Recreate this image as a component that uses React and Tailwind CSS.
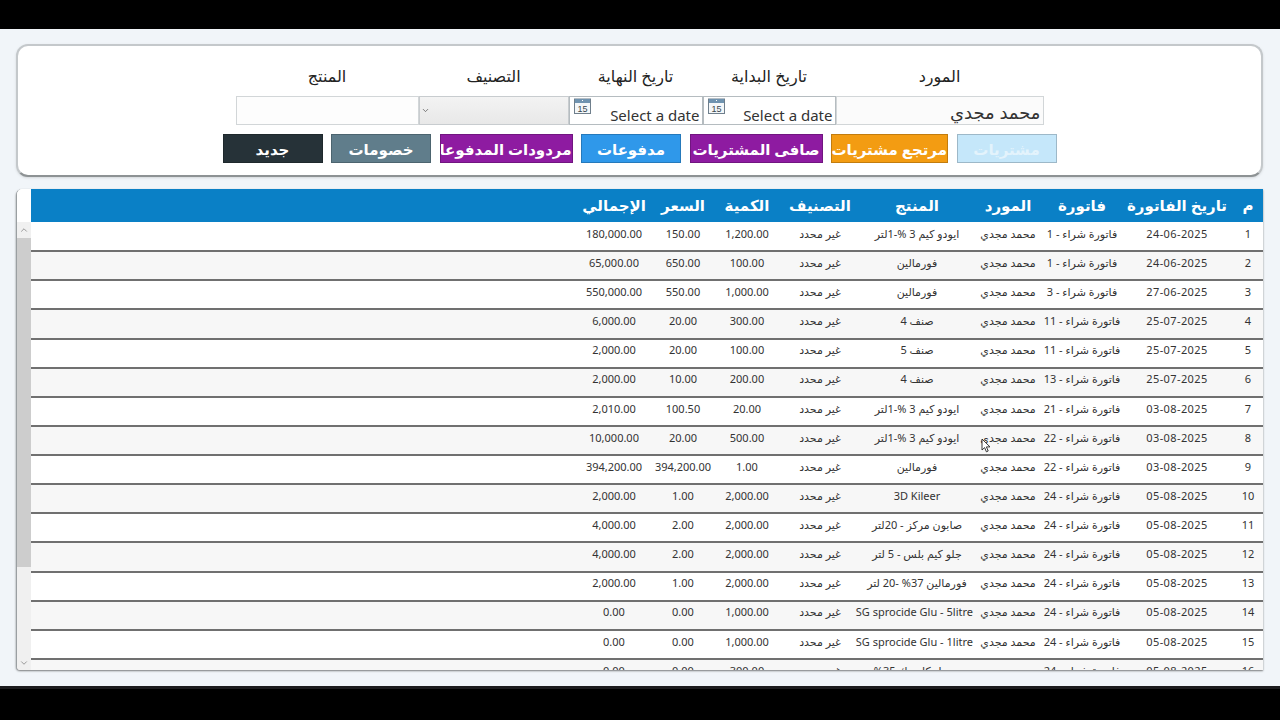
import { ChevronDown, ChevronUp } from "lucide-react";

const rows = [
  ["1", "24-06-2025", "فاتورة شراء - 1", "ايودو كيم 3 %-1لتر", "1,200.00", "150.00", "180,000.00"],
  ["2", "24-06-2025", "فاتورة شراء - 1", "فورمالين", "100.00", "650.00", "65,000.00"],
  ["3", "27-06-2025", "فاتورة شراء - 3", "فورمالين", "1,000.00", "550.00", "550,000.00"],
  ["4", "25-07-2025", "فاتورة شراء - 11", "صنف 4", "300.00", "20.00", "6,000.00"],
  ["5", "25-07-2025", "فاتورة شراء - 11", "صنف 5", "100.00", "20.00", "2,000.00"],
  ["6", "25-07-2025", "فاتورة شراء - 13", "صنف 4", "200.00", "10.00", "2,000.00"],
  ["7", "03-08-2025", "فاتورة شراء - 21", "ايودو كيم 3 %-1لتر", "20.00", "100.50", "2,010.00"],
  ["8", "03-08-2025", "فاتورة شراء - 22", "ايودو كيم 3 %-1لتر", "500.00", "20.00", "10,000.00"],
  ["9", "03-08-2025", "فاتورة شراء - 22", "فورمالين", "1.00", "394,200.00", "394,200.00"],
  ["10", "05-08-2025", "فاتورة شراء - 24", "3D Kileer", "2,000.00", "1.00", "2,000.00"],
  ["11", "05-08-2025", "فاتورة شراء - 24", "صابون مركز - 20لتر", "2,000.00", "2.00", "4,000.00"],
  ["12", "05-08-2025", "فاتورة شراء - 24", "جلو كيم بلس - 5 لتر", "2,000.00", "2.00", "4,000.00"],
  ["13", "05-08-2025", "فاتورة شراء - 24", "فورمالين 37% -20 لتر", "2,000.00", "1.00", "2,000.00"],
  ["14", "05-08-2025", "فاتورة شراء - 24", "SG sprocide Glu - 5litre", "1,000.00", "0.00", "0.00"],
  ["15", "05-08-2025", "فاتورة شراء - 24", "SG sprocide Glu - 1litre", "1,000.00", "0.00", "0.00"],
  ["16", "05-08-2025", "فاتورة شراء - 24", "معجل كلوريك 35% ", "300.00", "0.00", "0.00"],
];

function CalendarIcon() {
  return (
    <svg width="17" height="16" viewBox="0 0 17 16" className="absolute left-1 top-px">
      <rect x="0.5" y="1" width="16" height="14.5" fill="#f4f7f9" stroke="#6f7f8c" />
      <rect x="1" y="1" width="15" height="4" fill="#6f93b0" />
      <rect x="8" y="2" width="1" height="1" fill="#fff" />
      <text x="8.5" y="13.5" fontSize="9" textAnchor="middle" fill="#37474f" fontFamily="Liberation Sans, sans-serif">15</text>
    </svg>
  );
}

function Field({ label, width, children }) {
  return (
    <div className={`flex flex-col ${width}`}>
      <label className="h-[50px] pt-[18px] text-center text-base leading-6 text-[#222]">{label}</label>
      {children}
    </div>
  );
}

function DateField({ label, width }) {
  return (
    <Field label={label} width={width}>
      <div dir="ltr" className="relative h-[29px] border border-[#b5bcc0] bg-white pr-0.5 pt-[6px] text-right text-[15px] leading-6 text-[#333]">
        <CalendarIcon />
        Select a date
      </div>
    </Field>
  );
}

function Btn({ width, color, text = "text-white", children }) {
  return (
    <button className={`h-[29px] overflow-hidden whitespace-nowrap border border-black/20 text-[15px] font-bold leading-6 ${width} ${color} ${text}`}>
      {children}
    </button>
  );
}

const cols = ["w-[30px]", "w-[112px]", "w-[78px]", "w-[70px]", "w-[112px]", "w-[82px]", "w-[64px]", "w-[64px]", "w-[74px]"];

export default function App() {
  return (
    <div dir="rtl" className="relative flex h-[720px] w-[1280px] flex-col overflow-hidden bg-[#f1f5f9] font-['Noto_Sans','DejaVu_Sans',sans-serif]">
      <div className="h-[29px] shrink-0 bg-black" />
      <div className="flex flex-1 flex-col gap-[12px] px-4 pb-4 pr-[17px] pt-[15px]">
        {/* filters */}
        <section className="h-[133px] shrink-0 rounded-xl border-2 border-[#c4c8cb] border-b-[#8d9294] bg-white shadow-sm">
          <div className="flex justify-center">
            <Field label="المورد" width="w-[208px]">
              <div className="h-[29px] border border-[#d2d6d8] bg-[#fbfbfb] px-0.5 pt-px text-lg leading-7 text-[#333]">محمد مجدي</div>
            </Field>
            <DateField label="تاريخ البداية" width="w-[133px]" />
            <DateField label="تاريخ النهاية" width="w-[134px]" />
            <Field label="التصنيف" width="w-[150px]">
              <div className="flex h-[29px] items-center justify-end border border-[#c8cccf] bg-linear-to-b from-[#f3f3f3] to-[#e8e8e8] pl-px text-[#555]">
                <ChevronDown size={9} strokeWidth={2} />
              </div>
            </Field>
            <Field label="المنتج" width="w-[183px]">
              <div className="h-[29px] border border-[#d2d6d8] bg-[#fdfdfd]" />
            </Field>
          </div>
          <div className="mt-[9px] flex justify-center gap-[8.5px]">
            <Btn width="w-[100px]" color="bg-[#c5e7fa]" text="text-[#e3f3fc]">مشتريات</Btn>
            <Btn width="w-[117px]" color="bg-[#f39c12]">مرتجع مشتريات</Btn>
            <Btn width="w-[133px]" color="bg-[#8e1ba1]">صافى المشتريات</Btn>
            <Btn width="w-[100px]" color="bg-[#2f98ea]">مدفوعات</Btn>
            <Btn width="w-[133px]" color="bg-[#8e1ba1]">مردودات المدفوعا</Btn>
            <Btn width="w-[100px]" color="bg-[#607d8b]">خصومات</Btn>
            <Btn width="w-[100px]" color="bg-[#263238]">جديد</Btn>
          </div>
        </section>

        {/* invoices table */}
        <section className="flex h-[481px] shrink-0 overflow-hidden rounded-tl-md rounded-bl-sm border-l border-[#9a9fa2] bg-white shadow-[0_1px_2px_rgba(0,0,0,0.5)]">
          <div className="min-w-0 flex-1">
            <div className="flex h-[33px] items-center bg-[#0a80c6] text-[15px] font-bold text-white">
              {["م", "تاريخ الفاتورة", "فاتورة", "المورد", "المنتج", "التصنيف", "الكمية", "السعر", "الإجمالي"].map((h, i) => (
                <div key={h} className={`${cols[i]} shrink-0 whitespace-nowrap text-center`}>{h}</div>
              ))}
            </div>
            <div className="pt-px">
              {rows.map((r, i) => (
                <div key={r[0]} className={`box-border flex h-[29.14px] items-center whitespace-nowrap border-b-2 border-[#707070] pb-[5px] text-[11px] text-[#333] ${i % 2 ? "bg-[#f7f7f7]" : "bg-white"}`}>
                  <div className={`${cols[0]} shrink-0 text-center`}>{r[0]}</div>
                  <div className={`${cols[1]} shrink-0 text-center tracking-[0.4px]`}>{r[1]}</div>
                  <div className={`${cols[2]} shrink-0 text-center`}>{r[2]}</div>
                  <div className={`${cols[3]} shrink-0 text-center`}>محمد مجدي</div>
                  <div className={`${cols[4]} shrink-0 text-center`}>{r[3]}</div>
                  <div className={`${cols[5]} shrink-0 text-center`}>غير محدد</div>
                  <div className={`${cols[6]} shrink-0 text-center`}>{r[4]}</div>
                  <div className={`${cols[7]} shrink-0 text-center`}>{r[5]}</div>
                  <div className={`${cols[8]} shrink-0 text-center`}>{r[6]}</div>
                </div>
              ))}
            </div>
          </div>
          <div className="flex w-[14px] shrink-0 flex-col items-center bg-[#f0f0f0] text-[#888]">
            <div className="h-[33px] w-full shrink-0 bg-white" />
            <ChevronUp size={10} className="my-[3px] shrink-0" />
            <div className="h-[329px] w-full shrink-0 bg-[#cdcdcd]" />
            <div className="flex-1" />
            <ChevronDown size={10} className="mb-[2px] shrink-0" />
          </div>
        </section>
      </div>
      <div className="h-[34px] shrink-0 border-t-[3px] border-[#1c1c1e] bg-black" />

      {/* mouse pointer */}
      <svg width="10" height="15" viewBox="0 0 10 15" className="absolute left-[981px] top-[438px]">
        <path d="M1 1v11l2.6-2.4 1.8 4.2 1.8-.8-1.8-4.1H9z" fill="#fff" stroke="#222" strokeWidth="0.9" />
      </svg>
    </div>
  );
}
